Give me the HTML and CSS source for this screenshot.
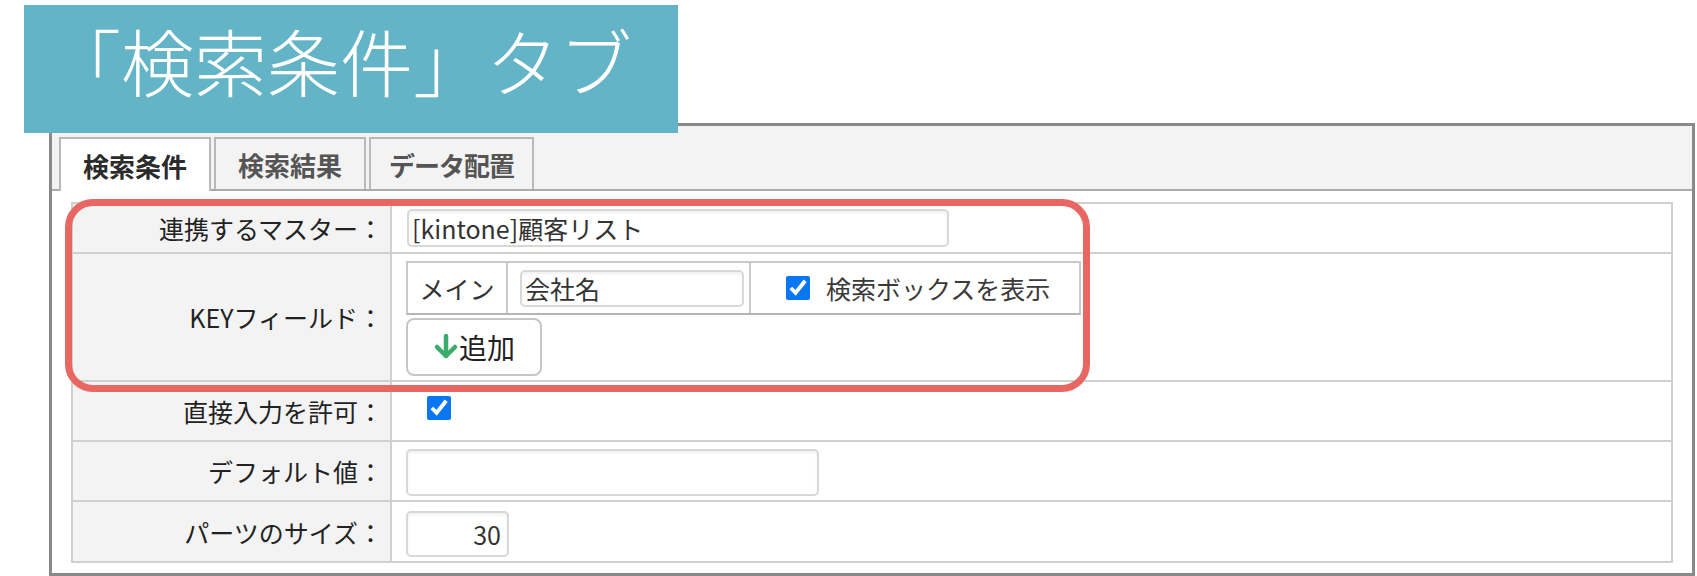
FILE: index.html
```html
<!DOCTYPE html>
<html lang="ja">
  <head>
    <meta charset="UTF-8" />
    <title>検索条件タブ</title>
    <link rel="stylesheet" href="styles.css">
  </head>
  <body>
    <div class="banner">「検索条件」タブ</div>
    <div class="panel">
      <div class="tabs">
        <div class="tabs__tab active">検索条件</div>
        <div class="tabs__tab">検索結果</div>
        <div class="tabs__tab wide">データ配置</div>
      </div>
      <div class="panel__body">
        <div class="form">
          <div class="form__label row1">連携するマスター：</div>
          <div class="form__value row1">
            <input class="field field--master" type="text" value="[kintone]顧客リスト" />
          </div>

          <div class="form__label row2">KEYフィールド：</div>
          <div class="form__value row2 stack">
            <div class="keys">
              <div class="keys__cell keys__name">メイン</div>
              <div class="keys__cell keys__input">
                <input class="field field--key" type="text" value="会社名" />
              </div>
              <div class="keys__cell keys__check">
                <input class="check" type="checkbox" checked />
                <span>検索ボックスを表示</span>
              </div>
            </div>
            <button class="add">
              <svg width="26" height="28" viewBox="0 0 26 28">
                <path d="M13 3 V23 M4 14 L13 23 L22 14" fill="none" stroke="#3bab6c" stroke-width="4.5" stroke-linecap="round" stroke-linejoin="round" />
              </svg>追加
            </button>
          </div>

          <div class="form__label row3">直接入力を許可：</div>
          <div class="form__value row3 indent">
            <input class="check" type="checkbox" checked />
          </div>

          <div class="form__label row4">デフォルト値：</div>
          <div class="form__value row4">
            <input class="field field--default" type="text" value="" />
          </div>

          <div class="form__label row5 last">パーツのサイズ：</div>
          <div class="form__value row5 last">
            <input class="field field--size" type="text" value="30" />
          </div>

          <!-- red frame around the first two rows -->
          <div class="highlight"></div>
        </div>
      </div>
    </div>
  </body>
</html>
```

FILE: styles.css
```css
* {
  box-sizing: border-box;
}
body {
  margin: 0;
  width: 1697px;
  height: 576px;
  overflow: hidden;
  background: #fff;
  color: #333;
  font-family: "Noto Sans CJK JP", "Noto Sans", sans-serif;
}

.banner {
  position: relative;
  z-index: 2;
  display: flex;
  align-items: center;
  width: 654px;
  height: 128px;
  margin: 5px 0 0 24px;
  padding: 0 0 20px 24px;
  background-color: #64b4c7;
  color: #fff;
  font-size: 73px;
  font-weight: 300;
  white-space: nowrap;
}

.panel {
  width: 1646px;
  height: 453px;
  margin: -10px 0 0 49px;
  border: 3px solid #8a8a8a;
  display: flex;
  flex-direction: column;
}

.tabs {
  display: flex;
  align-items: flex-end;
  gap: 3px;
  height: 65px;
  padding: 10px 0 0 7px;
  background-color: #f3f3f3;
  border-bottom: 2px solid #ababab;
}
.tabs__tab {
  width: 152px;
  height: 52px;
  display: flex;
  align-items: center;
  justify-content: center;
  border: 2px solid #b9b9b9;
  border-bottom: none;
  background-color: #f3f3f3;
  color: #555;
  font-size: 26px;
  font-weight: bold;
  white-space: nowrap;
}
.tabs__tab.wide {
  width: 165px;
  letter-spacing: -1px;
}
.tabs__tab.active {
  height: 54px;
  margin-bottom: -2px;
  background-color: #fff;
  color: #2b2b2b;
}

.panel__body {
  flex: 1;
  padding: 11px 19px 0 19px;
}

.form {
  position: relative;
  display: grid;
  grid-template-columns: 319px 1fr;
  grid-template-rows: 50px 128px 60px 60px 59px;
  border: 2px solid #d0d0d0;
}
.form__label,
.form__value {
  border-bottom: 2px solid #d0d0d0;
  font-size: 25px;
}
.form__label {
  display: flex;
  align-items: center;
  justify-content: flex-end;
  padding-right: 7px;
  background-color: #f3f3f3;
  border-right: 2px solid #d0d0d0;
  color: #222;
}
.form__value {
  display: flex;
  align-items: center;
  padding-left: 14px;
  background-color: #fff;
}
.form__label.last,
.form__value.last {
  border-bottom: none;
}
.form__value.stack {
  flex-direction: column;
  align-items: flex-start;
  justify-content: flex-start;
  padding-top: 7px;
}
.form__value.indent {
  padding-left: 35px;
  padding-bottom: 6px;
}

.field {
  height: 38px;
  padding: 0 3px;
  border: 2px solid #d8d8d8;
  border-radius: 5px;
  box-shadow: inset 0 2px 3px rgba(0, 0, 0, 0.06);
  background: #fff;
  color: #333;
  font-family: inherit;
  font-size: 25px;
  outline: none;
}
.field--master {
  width: 542px;
  margin-left: 1px;
}
.field--key {
  width: 224px;
  height: 37px;
}
.field--default {
  width: 413px;
  height: 47px;
  margin-top: 2px;
}
.field--size {
  width: 103px;
  height: 46px;
  padding-right: 6px;
  text-align: right;
  margin-top: 4px;
}

.keys {
  display: flex;
  width: 675px;
  height: 54px;
  border: 2px solid #c9c9c9;
  border-bottom-color: #b5b5b5;
}
.keys__cell {
  display: flex;
  align-items: center;
  height: 100%;
}
.keys__name {
  width: 100px;
  justify-content: center;
  border-right: 2px solid #c9c9c9;
}
.keys__input {
  width: 243px;
  padding-left: 12px;
  border-right: 2px solid #c9c9c9;
}
.keys__check {
  flex: 1;
  padding-left: 35px;
  gap: 16px;
  color: #3a3a3a;
}

.check {
  width: 24px;
  height: 24px;
  margin: 0;
  accent-color: #0b76f2;
}

.add {
  display: flex;
  align-items: center;
  justify-content: center;
  width: 136px;
  height: 58px;
  margin-top: 3px;
  padding: 0;
  border: 2px solid #c6c6c6;
  border-radius: 8px;
  background: #fff;
  color: #222;
  font-family: inherit;
  font-size: 28px;
}

.highlight {
  position: absolute;
  left: -8px;
  top: -5px;
  width: 1025px;
  height: 193px;
  border: 7px solid #e96762;
  border-radius: 28px;
  pointer-events: none;
}
```
